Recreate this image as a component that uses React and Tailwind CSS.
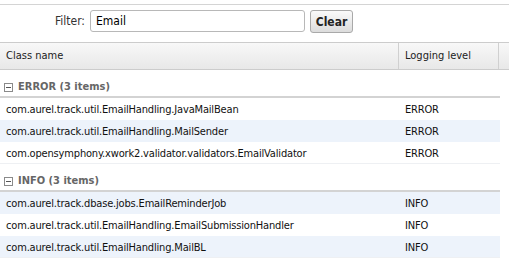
import React, { useState } from "react";

const groups = [
  {
    level: "ERROR",
    items: [
      "com.aurel.track.util.EmailHandling.JavaMailBean",
      "com.aurel.track.util.EmailHandling.MailSender",
      "com.opensymphony.xwork2.validator.validators.EmailValidator",
    ],
  },
  {
    level: "INFO",
    items: [
      "com.aurel.track.dbase.jobs.EmailReminderJob",
      "com.aurel.track.util.EmailHandling.EmailSubmissionHandler",
      "com.aurel.track.util.EmailHandling.MailBL",
    ],
  },
];

function CollapseIcon() {
  return (
    <svg width="9" height="9" viewBox="0 0 9 9" className="shrink-0">
      <rect x="0.5" y="0.5" width="8" height="8" fill="#fff" stroke="#8a8a8a" />
      <path d="M2 4.5h5" stroke="#555" strokeWidth="1" />
    </svg>
  );
}

export default function App() {
  const [filter, setFilter] = useState("Email");
  let rowIndex = 0;

  return (
    <div
      className="w-[509px] h-[262px] overflow-hidden bg-white text-[11px] text-[#111]"
      style={{ fontFamily: '"DejaVu Sans Condensed", "DejaVu Sans", sans-serif' }}
    >
      {/* barre du filtre */}
      <div className="h-[4px] bg-white" />
      <div className="h-[38px] border-t border-[#d4d4d4] flex items-start pt-[5px]">
        <span className="w-[90px] h-[22px] leading-[22px] text-right text-[#333] text-[12px] pr-[5px]">Filter:</span>
        <input
          value={filter}
          onChange={(e) => setFilter(e.target.value)}
          className="w-[215px] h-[22px] border border-[#b8b8b8] rounded-[3px] px-[5px] text-[12px] text-black outline-none"
        />
        <button className="ml-[5px] w-[43px] h-[23px] border border-[#a9a9a9] rounded-[3px] bg-gradient-to-b from-[#fafafa] to-[#dcdcdc] font-bold text-[12px] text-[#222]">
          Clear
        </button>
      </div>

      {/* en-tête du tableau */}
      <div className="flex h-[28px] border-t border-b border-[#cccccc] bg-gradient-to-b from-[#f8f8f8] to-[#e8e8e8] text-[#222]">
        <div className="w-[399px] border-r border-[#d0d0d0] flex items-center pl-[6px] pt-[1px]">Class name</div>
        <div className="w-[100px] border-r border-[#d0d0d0] flex items-center pl-[6px] pt-[1px]">Logging level</div>
        <div className="flex-1" />
      </div>

      {/* groupes */}
      <div className="w-[500px]">
        {groups.map((g) => (
          <div key={g.level}>
            <div className="flex items-center gap-[5px] pl-[4px] pt-[11px] pb-[3px] h-[28px] border-b-2 border-[#d3d3d3] font-bold text-[#666]">
              <CollapseIcon />
              <span>
                {g.level} ({g.items.length} items)
              </span>
            </div>
            {g.items.map((name, i) => {
              const odd = rowIndex++ % 2 === 1;
              const last = i === g.items.length - 1;
              return (
                <div
                  key={name}
                  className={`flex h-[22px] items-center pt-[3px] tracking-[-0.17px] ${odd ? "bg-[#edf3fb]" : "bg-white"} ${last ? "border-b border-[#eef0f3]" : ""}`}
                >
                  <div className="w-[399px] pl-[6px] truncate">{name}</div>
                  <div className="pl-[6px]">{g.level}</div>
                </div>
              );
            })}
          </div>
        ))}
      </div>
    </div>
  );
}
